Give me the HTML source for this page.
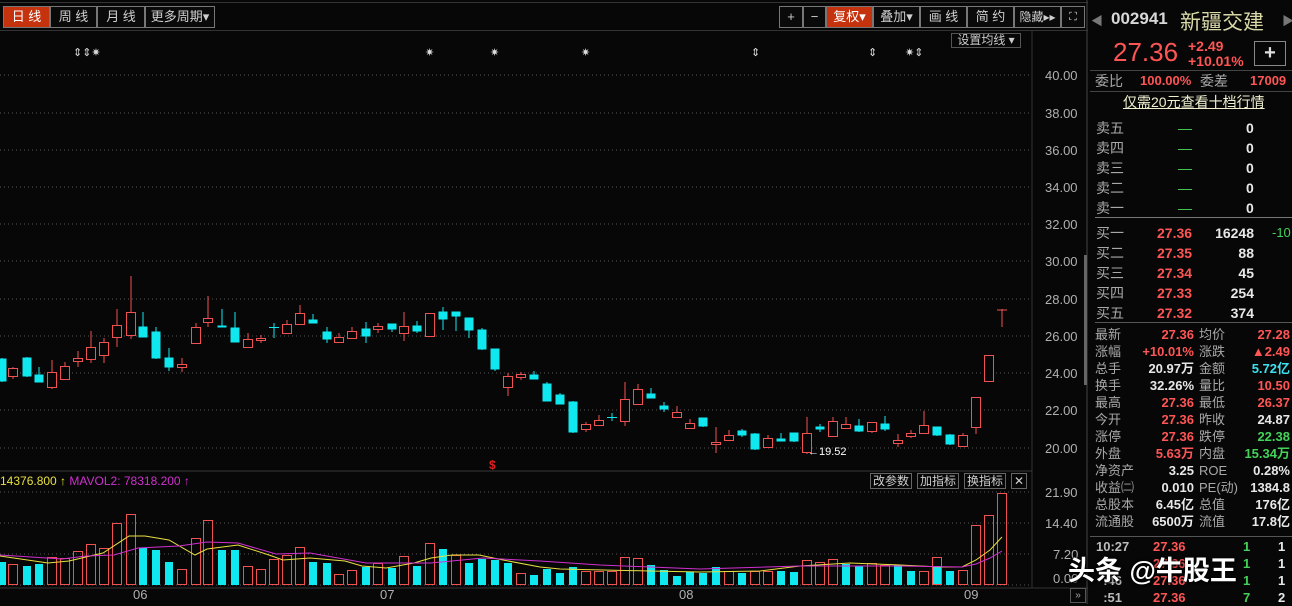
<!DOCTYPE html>
<html><head><meta charset="utf-8">
<style>
*{margin:0;padding:0;box-sizing:border-box}
body{width:1292px;height:604px;background:#070707;overflow:hidden;position:relative;font-family:"Liberation Sans","Noto Sans CJK SC",sans-serif;color:#c8c8c8}
.a{position:absolute;white-space:nowrap}
.btn{position:absolute;top:6px;height:22px;border:1px solid #777;color:#cfcfcf;font-size:13px;line-height:20px;text-align:center;background:#0a0a0a}
.on{background:#c4330e;color:#fff}
.p{position:absolute;font-size:13px;white-space:nowrap;line-height:16px}
.g{color:#a8a8a8}.r{color:#ff5555}.w{color:#e8e8e8}.gr{color:#44d25a}.c{color:#3de0ee}
.sb{position:absolute;font-size:12px;color:#cfcfcf;border:1px solid #666;height:16px;line-height:14px;padding:0 2px;top:473px}
</style></head><body>
<div class="a" style="left:0;top:2px;width:1088px;height:1px;background:#333"></div>
<div class="btn on" style="left:3px;width:47px">日 线</div>
<div class="btn" style="left:50px;width:47px">周 线</div>
<div class="btn" style="left:97px;width:48px">月 线</div>
<div class="btn" style="left:145px;width:70px">更多周期▾</div>
<div class="btn" style="left:779px;width:24px">+</div>
<div class="btn" style="left:803px;width:23px">−</div>
<div class="btn on" style="left:826px;width:47px">复权▾</div>
<div class="btn" style="left:873px;width:47px">叠加▾</div>
<div class="btn" style="left:920px;width:47px">画 线</div>
<div class="btn" style="left:967px;width:47px">简 约</div>
<div class="btn" style="left:1014px;width:47px;font-size:12px">隐藏▸▸</div>
<div class="btn" style="left:1061px;width:24px;font-size:11px">⛶</div>
<div class="a" style="left:0;top:30px;width:1088px;height:1px;background:#333"></div>
<div class="a" style="left:951px;top:33px;width:70px;height:15px;border:1px solid #555;font-size:12px;line-height:13px;color:#ccc;text-align:center">设置均线 ▾</div>

<svg class="a" style="left:0;top:0" width="1088" height="604">
<g stroke="#555" stroke-dasharray="1,3" stroke-width="1">
<line x1="0" y1="75" x2="1032" y2="75"/><line x1="0" y1="113" x2="1032" y2="113"/><line x1="0" y1="150" x2="1032" y2="150"/><line x1="0" y1="187" x2="1032" y2="187"/><line x1="0" y1="224" x2="1032" y2="224"/><line x1="0" y1="261" x2="1032" y2="261"/><line x1="0" y1="299" x2="1032" y2="299"/><line x1="0" y1="336" x2="1032" y2="336"/><line x1="0" y1="373" x2="1032" y2="373"/><line x1="0" y1="410" x2="1032" y2="410"/><line x1="0" y1="448" x2="1032" y2="448"/>
<line x1="0" y1="492" x2="1032" y2="492"/><line x1="0" y1="523" x2="1032" y2="523"/><line x1="0" y1="554" x2="1032" y2="554"/><line x1="0" y1="585" x2="1032" y2="585"/>
</g>
<line x1="1032" y1="30" x2="1032" y2="588" stroke="#333"/>
<line x1="0" y1="471" x2="1032" y2="471" stroke="#3a3a3a"/>
<line x1="0" y1="588" x2="1088" y2="588" stroke="#333"/>
<line x1="1087" y1="0" x2="1087" y2="604" stroke="#444"/>
<rect x="1084" y="255" width="3" height="130" fill="#666"/>
<g font-size="13" fill="#b0b0b0" font-family="Liberation Sans">
<text x="1045" y="80">40.00</text><text x="1045" y="118">38.00</text><text x="1045" y="155">36.00</text><text x="1045" y="192">34.00</text><text x="1045" y="229">32.00</text><text x="1045" y="266">30.00</text><text x="1045" y="304">28.00</text><text x="1045" y="341">26.00</text><text x="1045" y="378">24.00</text><text x="1045" y="415">22.00</text><text x="1045" y="453">20.00</text>
<text x="1045" y="497">21.90</text><text x="1045" y="528">14.40</text><text x="1053" y="559">7.20</text><text x="1053" y="583">0.00</text>
<text x="133" y="599">06</text><text x="380" y="599">07</text><text x="679" y="599">08</text><text x="964" y="599">09</text>
</g>
<g font-size="11" fill="#ddd"><text x="73" y="56">⇕⇕✷</text><text x="425" y="56">✷</text><text x="490" y="56">✷</text><text x="581" y="56">✷</text><text x="751" y="56">⇕</text><text x="868" y="56">⇕</text><text x="905" y="56">✷⇕</text></g>
<text x="489" y="469" font-size="12" fill="#e02020" font-weight="bold">$</text>
<text x="808" y="455" font-size="11" fill="#fff">←19.52</text>
<g stroke="#f05252" fill="#070707" stroke-width="1">
<path d="M13 367V379M52 360V389M65 362V379M78 351V367M91 331V363M104 338V363M117 309V347M131 276V339M182 358V372M196 323V343M208 296V327M248 333V347M261 335V343M287 320V333M300 305V324M339 333V342M352 327V338M378 323V333M404 312V341M430 313V337M508 373V396M521 372V380M586 422V432M599 415V425M625 382V426M638 384V404M677 406V417M690 419V428M716 427V453M729 430V440M768 435V448M807 417V454M833 417V436M846 417V428M872 422V433M898 434V447M911 430V438M924 411V433M963 433V446M976 397V434M989 355V381M1002 309V327M997 310H1007"/>
<rect x="8.5" y="368.5" width="9" height="8"/><rect x="47.5" y="372.5" width="9" height="15"/><rect x="60.5" y="366.5" width="9" height="13"/><rect x="73.5" y="358.5" width="9" height="3"/><rect x="86.5" y="347.5" width="9" height="12"/><rect x="99.5" y="342.5" width="9" height="13"/><rect x="112.5" y="325.5" width="9" height="12"/><rect x="126.5" y="312.5" width="9" height="23"/><rect x="177.5" y="364.5" width="9" height="3"/><rect x="191.5" y="327.5" width="9" height="16"/><rect x="203.5" y="318.5" width="9" height="4"/><rect x="243.5" y="339.5" width="9" height="8"/><rect x="256.5" y="338.5" width="9" height="2"/><rect x="282.5" y="324.5" width="9" height="9"/><rect x="295.5" y="313.5" width="9" height="11"/><rect x="334.5" y="337.5" width="9" height="5"/><rect x="347.5" y="331.5" width="9" height="7"/><rect x="373.5" y="326.5" width="9" height="3"/><rect x="399.5" y="326.5" width="9" height="7"/><rect x="425.5" y="313.5" width="9" height="23"/><rect x="503.5" y="376.5" width="9" height="11"/><rect x="516.5" y="374.5" width="9" height="3"/><rect x="581.5" y="424.5" width="9" height="5"/><rect x="594.5" y="420.5" width="9" height="5"/><rect x="620.5" y="399.5" width="9" height="22"/><rect x="633.5" y="389.5" width="9" height="15"/><rect x="672.5" y="412.5" width="9" height="5"/><rect x="685.5" y="423.5" width="9" height="5"/><rect x="711.5" y="442.5" width="9" height="2"/><rect x="724.5" y="435.5" width="9" height="5"/><rect x="763.5" y="438.5" width="9" height="9"/><rect x="802.5" y="433.5" width="9" height="19"/><rect x="828.5" y="421.5" width="9" height="15"/><rect x="841.5" y="424.5" width="9" height="4"/><rect x="867.5" y="422.5" width="9" height="9"/><rect x="893.5" y="440.5" width="9" height="3"/><rect x="906.5" y="433.5" width="9" height="3"/><rect x="919.5" y="425.5" width="9" height="8"/><rect x="958.5" y="435.5" width="9" height="11"/><rect x="971.5" y="397.5" width="9" height="30"/><rect x="984.5" y="355.5" width="9" height="26"/>
</g>
<g stroke="#10e8f0" fill="#10e8f0" stroke-width="1">
<path d="M2 358V382M27 357V377M39 367V382M143 312V337M156 327V359M169 348V371M222 309V327M235 312V342M274 323V338M269 327.5H279M313 314V323M327 327V343M366 322V343M392 324V332M417 321V333M443 307V330M456 312V331M469 318V338M482 328V350M495 349V371M534 371V379M547 382V401M560 393V404M573 401V433M612 413V421M607 417.5H617M651 388V398M664 402V412M703 418V427M742 429V437M755 433V450M781 433V441M794 433V442M820 424V432M859 419V432M885 416V431M937 427V436M950 434V445"/>
<rect x="-2" y="359" width="8" height="22"/><rect x="23" y="358" width="8" height="18"/><rect x="35" y="375" width="8" height="7"/><rect x="139" y="327" width="8" height="10"/><rect x="152" y="332" width="8" height="26"/><rect x="165" y="358" width="8" height="9"/><rect x="218" y="326" width="8" height="1"/><rect x="231" y="328" width="8" height="14"/><rect x="309" y="320" width="8" height="3"/><rect x="323" y="332" width="8" height="7"/><rect x="362" y="329" width="8" height="7"/><rect x="388" y="324" width="8" height="5"/><rect x="413" y="326" width="8" height="5"/><rect x="439" y="312" width="8" height="7"/><rect x="452" y="312" width="8" height="4"/><rect x="465" y="318" width="8" height="12"/><rect x="478" y="330" width="8" height="19"/><rect x="491" y="349" width="8" height="20"/><rect x="530" y="375" width="8" height="4"/><rect x="543" y="384" width="8" height="17"/><rect x="556" y="395" width="8" height="9"/><rect x="569" y="402" width="8" height="30"/><rect x="647" y="394" width="8" height="4"/><rect x="660" y="406" width="8" height="3"/><rect x="699" y="418" width="8" height="8"/><rect x="738" y="431" width="8" height="4"/><rect x="751" y="434" width="8" height="15"/><rect x="777" y="439" width="8" height="2"/><rect x="790" y="433" width="8" height="8"/><rect x="816" y="427" width="8" height="2"/><rect x="855" y="426" width="8" height="5"/><rect x="881" y="424" width="8" height="5"/><rect x="933" y="427" width="8" height="8"/><rect x="946" y="435" width="8" height="9"/>
</g>
<g fill="#10e8f0">
<rect x="-2" y="562" width="8" height="23"/><rect x="23" y="566" width="8" height="19"/><rect x="35" y="564" width="8" height="21"/><rect x="139" y="548" width="8" height="37"/><rect x="152" y="550" width="8" height="35"/><rect x="165" y="562" width="8" height="23"/><rect x="218" y="550" width="8" height="35"/><rect x="231" y="550" width="8" height="35"/><rect x="309" y="562" width="8" height="23"/><rect x="323" y="563" width="8" height="22"/><rect x="362" y="567" width="8" height="18"/><rect x="388" y="568" width="8" height="17"/><rect x="413" y="566" width="8" height="19"/><rect x="439" y="549" width="8" height="36"/><rect x="465" y="563" width="8" height="22"/><rect x="478" y="559" width="8" height="26"/><rect x="491" y="560" width="8" height="25"/><rect x="504" y="563" width="8" height="22"/><rect x="530" y="575" width="8" height="10"/><rect x="543" y="569" width="8" height="16"/><rect x="556" y="573" width="8" height="12"/><rect x="569" y="567" width="8" height="18"/><rect x="647" y="565" width="8" height="20"/><rect x="660" y="570" width="8" height="15"/><rect x="673" y="576" width="8" height="9"/><rect x="686" y="572" width="8" height="13"/><rect x="699" y="573" width="8" height="12"/><rect x="712" y="567" width="8" height="18"/><rect x="738" y="573" width="8" height="12"/><rect x="777" y="571" width="8" height="14"/><rect x="790" y="572" width="8" height="13"/><rect x="842" y="564" width="8" height="21"/><rect x="855" y="566" width="8" height="19"/><rect x="894" y="565" width="8" height="20"/><rect x="907" y="571" width="8" height="14"/><rect x="933" y="566" width="8" height="19"/><rect x="946" y="571" width="8" height="14"/>
</g>
<g stroke="#f05252" fill="none">
<rect x="8.5" y="564.5" width="9" height="20"/><rect x="47.5" y="557.5" width="9" height="27"/><rect x="60.5" y="558.5" width="9" height="26"/><rect x="73.5" y="551.5" width="9" height="33"/><rect x="86.5" y="544.5" width="9" height="40"/><rect x="99.5" y="548.5" width="9" height="36"/><rect x="112.5" y="523.5" width="9" height="61"/><rect x="126.5" y="514.5" width="9" height="70"/><rect x="177.5" y="569.5" width="9" height="15"/><rect x="191.5" y="538.5" width="9" height="46"/><rect x="203.5" y="520.5" width="9" height="64"/><rect x="243.5" y="566.5" width="9" height="18"/><rect x="256.5" y="569.5" width="9" height="15"/><rect x="269.5" y="559.5" width="9" height="25"/><rect x="282.5" y="555.5" width="9" height="29"/><rect x="295.5" y="547.5" width="9" height="37"/><rect x="334.5" y="574.5" width="9" height="10"/><rect x="347.5" y="570.5" width="9" height="14"/><rect x="373.5" y="563.5" width="9" height="21"/><rect x="399.5" y="556.5" width="9" height="28"/><rect x="425.5" y="543.5" width="9" height="41"/><rect x="451.5" y="555.5" width="9" height="29"/><rect x="516.5" y="573.5" width="9" height="11"/><rect x="581.5" y="571.5" width="9" height="13"/><rect x="594.5" y="571.5" width="9" height="13"/><rect x="607.5" y="571.5" width="9" height="13"/><rect x="620.5" y="557.5" width="9" height="27"/><rect x="633.5" y="558.5" width="9" height="26"/><rect x="724.5" y="571.5" width="9" height="13"/><rect x="750.5" y="571.5" width="9" height="13"/><rect x="763.5" y="571.5" width="9" height="13"/><rect x="802.5" y="560.5" width="9" height="24"/><rect x="815.5" y="562.5" width="9" height="22"/><rect x="828.5" y="559.5" width="9" height="25"/><rect x="867.5" y="563.5" width="9" height="21"/><rect x="880.5" y="565.5" width="9" height="19"/><rect x="919.5" y="571.5" width="9" height="13"/><rect x="932.5" y="557.5" width="9" height="27"/><rect x="958.5" y="570.5" width="9" height="14"/><rect x="971.5" y="525.5" width="9" height="59"/><rect x="984.5" y="515.5" width="9" height="69"/><rect x="997.5" y="493.5" width="9" height="91"/>
</g>
<polyline fill="none" stroke="#e8e040" stroke-width="1" points="0,556 48,563 69,561 103,553 129,536 145,536 169,540 195,555 207,549 238,545 269,555 283,560 310,558 345,561 362,566 386,568 414,563 431,558 452,555 479,555 503,560 540,567 560,569 650,571 700,572 760,571 800,566 850,563 900,565 940,567 962,567 976,560 990,550 1002,537"/>
<polyline fill="none" stroke="#d030d0" stroke-width="1" points="0,555 62,559 86,556 114,555 138,548 179,546 207,542 238,543 276,554 310,553 366,563 431,563 483,558 540,561 600,565 700,569 800,566 900,566 962,567 976,564 990,558 1002,551"/>
<text x="0" y="485" font-size="12" fill="#e8e040">14376.800 ↑ <tspan fill="#d030d0">MAVOL2: 78318.200 ↑</tspan></text>
</svg>
<div class="sb" style="left:870px">改参数</div>
<div class="sb" style="left:917px">加指标</div>
<div class="sb" style="left:964px">换指标</div>
<div class="sb" style="left:1011px;width:16px;text-align:center">✕</div>
<div class="a" style="left:1070px;top:588px;width:16px;height:15px;border:1px solid #555;font-size:10px;color:#aaa;text-align:center;line-height:13px">»</div>

<div class="a" style="left:1091px;top:12px;font-size:12px;color:#777">◀</div>
<div class="a" style="left:1111px;top:9px;font-size:17px;font-weight:bold;color:#d8d8d8">002941</div>
<div class="a" style="left:1180px;top:6px;font-size:21px;color:#d8d8a8">新疆交建</div>
<div class="a" style="left:1282px;top:12px;font-size:12px;color:#777">▶</div>
<div class="a" style="left:1113px;top:37px;font-size:26px;color:#ff5555">27.36</div>
<div class="p r" style="left:1188px;top:38px;font-size:14px;font-weight:bold">+2.49</div>
<div class="p r" style="left:1188px;top:53px;font-size:14px;font-weight:bold">+10.01%</div>
<div class="a" style="left:1254px;top:41px;width:32px;height:25px;border:1px solid #888;color:#ddd;font-size:20px;text-align:center;line-height:23px;font-weight:bold">+</div>
<div class="a" style="left:1090px;top:70px;width:202px;height:1px;background:#444"></div>
<div class="p g" style="left:1095px;top:73px;font-size:14px">委比</div>
<div class="p r" style="left:1140px;top:73px;font-weight:bold">100.00%</div>
<div class="p g" style="left:1200px;top:73px;font-size:14px">委差</div>
<div class="p r" style="left:1250px;top:73px;font-weight:bold">17009</div>
<div class="a" style="left:1090px;top:91px;width:202px;height:1px;background:#444"></div>
<div class="p" style="left:1123px;top:94px;font-size:14px;color:#f0f0d0;text-decoration:underline">仅需20元查看十档行情</div>
<div class="a" style="left:1096px;top:118px;font-size:14px;line-height:20px;color:#a8a8a8">卖五<br>卖四<br>卖三<br>卖二<br>卖一</div>
<div class="a" style="left:1178px;top:118px;font-size:14px;line-height:20px;color:#44d25a">—<br>—<br>—<br>—<br>—</div>
<div class="a" style="left:1246px;top:118px;font-size:14px;line-height:20px;color:#e8e8e8;font-weight:bold">0<br>0<br>0<br>0<br>0</div>
<div class="a" style="left:1095px;top:217px;width:197px;height:1px;background:#777"></div>
<div class="a" style="left:1096px;top:223px;font-size:14px;line-height:20px;color:#a8a8a8">买一<br>买二<br>买三<br>买四<br>买五</div>
<div class="a" style="left:1157px;top:223px;font-size:14px;line-height:20px;color:#ff5555;font-weight:bold">27.36<br>27.35<br>27.34<br>27.33<br>27.32</div>
<div class="a" style="left:1212px;top:223px;width:42px;text-align:right;font-size:14px;line-height:20px;color:#e8e8e8;font-weight:bold">16248<br>88<br>45<br>254<br>374</div>
<div class="p gr" style="left:1272px;top:225px">-10</div>
<div class="a" style="left:1095px;top:322px;width:197px;height:1px;background:#555"></div>
<div class="a" style="left:1095px;top:326px;font-size:13px;line-height:17px;color:#a8a8a8">最新<br>涨幅<br>总手<br>换手<br>最高<br>今开<br>涨停<br>外盘<br>净资产<br>收益㈡<br>总股本<br>流通股</div>
<div class="a" style="left:1138px;top:326px;width:56px;text-align:right;font-size:13px;line-height:17px;font-weight:bold"><span class="r">27.36</span><br><span class="r">+10.01%</span><br><span class="w">20.97万</span><br><span class="w">32.26%</span><br><span class="r">27.36</span><br><span class="r">27.36</span><br><span class="r">27.36</span><br><span class="r">5.63万</span><br><span class="w">3.25</span><br><span class="w">0.010</span><br><span class="w">6.45亿</span><br><span class="w">6500万</span></div>
<div class="a" style="left:1199px;top:326px;font-size:13px;line-height:17px;color:#a8a8a8">均价<br>涨跌<br>金额<br>量比<br>最低<br>昨收<br>跌停<br>内盘<br>ROE<br>PE(动)<br>总值<br>流值</div>
<div class="a" style="left:1232px;top:326px;width:58px;text-align:right;font-size:13px;line-height:17px;font-weight:bold"><span class="r">27.28</span><br><span class="r">▲2.49</span><br><span class="c">5.72亿</span><br><span class="r">10.50</span><br><span class="r">26.37</span><br><span class="w">24.87</span><br><span class="gr">22.38</span><br><span class="gr">15.34万</span><br><span class="w">0.28%</span><br><span class="w">1384.8</span><br><span class="w">176亿</span><br><span class="w">17.8亿</span></div>
<div class="a" style="left:1090px;top:536px;width:202px;height:1px;background:#555"></div>
<div class="a" style="left:1096px;top:538px;font-size:13px;line-height:17px;color:#bbb;font-weight:bold">10:27<br>&nbsp;<br>&nbsp;&nbsp;:46<br>&nbsp;&nbsp;:51</div>
<div class="a" style="left:1153px;top:538px;font-size:13px;line-height:17px;color:#ff5555;font-weight:bold">27.36<br>27.36<br>27.36<br>27.36</div>
<div class="a" style="left:1243px;top:538px;font-size:13px;line-height:17px;color:#44d25a;font-weight:bold">1<br>1<br>1<br>7</div>
<div class="a" style="left:1278px;top:538px;font-size:13px;line-height:17px;color:#e8e8e8;font-weight:bold">1<br>1<br>1<br>2</div>
<div class="a" style="left:1068px;top:549px;font-size:27px;color:#fff;font-weight:bold;text-shadow:0 0 3px #000,1px 1px 2px #000">头条 @牛股王</div>
</body></html>
